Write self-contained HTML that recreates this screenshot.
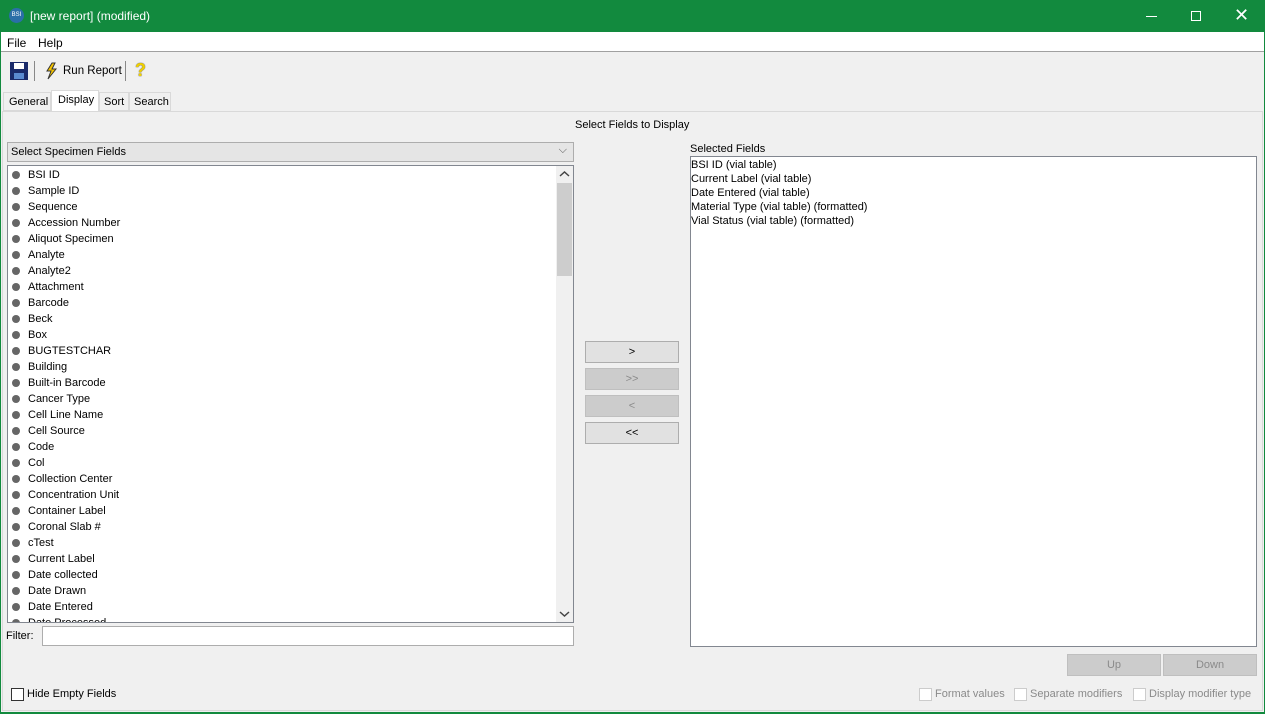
<!DOCTYPE html>
<html><head><style>
*{box-sizing:border-box;margin:0;padding:0}
body{width:1265px;height:714px;overflow:hidden;background:#f0f0f0;font-family:"Liberation Sans",sans-serif;font-size:11px;color:#000;position:relative}
.a{position:absolute}
.tb{left:0;top:0;width:1265px;height:32px;background:#128a3e;color:#fff;font-size:12px}
.list div{height:16px;line-height:16px;padding-left:20px;position:relative;white-space:nowrap}
.list div:before{content:"";position:absolute;left:4px;top:4px;width:8px;height:8px;border-radius:50%;background:#666}
.btn{border:1px solid #adadad;background:#e1e1e1;text-align:center;line-height:20px}
.dis{background:#cccccc;color:#8a8a8a;border-color:#bfbfbf}
.cb{width:13px;height:13px;border:1px solid #333;background:#fff}
.cbd{border-color:#ccc}
</style></head><body>
<div class="a tb">
 <div class="a" style="left:9px;top:8px;width:15px;height:15px;border-radius:50%;background:#2a6fa8;font-size:6px;line-height:15px;text-align:center">BSI</div>
 <div class="a" style="left:30px;top:9px">[new report] (modified)</div>
 <div class="a" style="left:1146px;top:16px;width:11px;height:1px;background:#fff"></div>
 <div class="a" style="left:1191px;top:11px;width:10px;height:10px;border:1px solid #fff"></div>
 <div class="a" style="left:1234px;top:3px;font-size:18px;line-height:24px">✕</div>
</div>
<div class="a" style="left:0;top:32px;width:1265px;height:20px;background:#fff;border-bottom:1px solid #a0a0a0"></div>
<div class="a" style="left:7px;top:36px;font-size:12px">File</div>
<div class="a" style="left:38px;top:36px;font-size:12px">Help</div>
<div class="a" style="left:0;top:32px;width:1px;height:682px;background:#128a3e"></div>
<div class="a" style="left:1264px;top:32px;width:1px;height:682px;background:#128a3e"></div>
<div class="a" style="left:0;top:712px;width:1265px;height:2px;background:#128a3e"></div>
<!-- toolbar -->
<svg class="a" style="left:10px;top:62px" width="18" height="18"><rect x="0" y="0" width="18" height="18" fill="#1a2a6a"/><rect x="4" y="1" width="10" height="6" fill="#fff"/><rect x="4" y="11" width="10" height="6" fill="#5a8ad0"/></svg>
<div class="a" style="left:34px;top:61px;width:1px;height:20px;background:#888"></div>
<svg class="a" style="left:44px;top:62px" width="14" height="18"><path d="M8 1 L3 9 L7 9 L4 17 L12 7 L8 7 L11 1 Z" fill="#f5c400" stroke="#333" stroke-width="1"/></svg>
<div class="a" style="left:63px;top:65px;font-size:11.5px">Run Report</div>
<div class="a" style="left:125px;top:61px;width:1px;height:20px;background:#888"></div>
<div class="a" style="left:135px;top:60px;font-size:18px;font-weight:bold;color:#f0d000;text-shadow:0 0 1px #000">?</div>
<!-- tabs -->
<div class="a" style="left:3px;top:92px;width:48px;height:19px;border:1px solid #d9d9d9;background:#f0f0f0;padding:3px 5px">General</div>
<div class="a" style="left:51px;top:90px;width:48px;height:21px;border:1px solid #d9d9d9;border-bottom:none;background:#fff;padding:3px 6px">Display</div>
<div class="a" style="left:99px;top:92px;width:30px;height:19px;border:1px solid #d9d9d9;background:#f0f0f0;padding:3px 4px">Sort</div>
<div class="a" style="left:129px;top:92px;width:42px;height:19px;border:1px solid #d9d9d9;background:#f0f0f0;padding:3px 4px">Search</div>
<div class="a" style="left:2px;top:111px;width:1261px;height:600px;border:1px solid #d9d9d9;background:#f0f0f0"></div>
<div class="a" style="left:575px;top:119px;font-size:11px">Select Fields to Display</div>
<!-- combo -->
<div class="a" style="left:7px;top:142px;width:567px;height:20px;border:1px solid #adadad;background:#e5e5e5;padding:3px 3px">Select Specimen Fields<span class="a" style="right:6px;top:1px;color:#555">⌵</span></div>
<!-- left list -->
<div class="a list" style="left:7px;top:165px;width:567px;height:458px;border:1px solid #828790;background:#fff;overflow:hidden;padding-top:1px">
<div>BSI ID</div><div>Sample ID</div><div>Sequence</div><div>Accession Number</div><div>Aliquot Specimen</div><div>Analyte</div><div>Analyte2</div><div>Attachment</div><div>Barcode</div><div>Beck</div><div>Box</div><div>BUGTESTCHAR</div><div>Building</div><div>Built-in Barcode</div><div>Cancer Type</div><div>Cell Line Name</div><div>Cell Source</div><div>Code</div><div>Col</div><div>Collection Center</div><div>Concentration Unit</div><div>Container Label</div><div>Coronal Slab #</div><div>cTest</div><div>Current Label</div><div>Date collected</div><div>Date Drawn</div><div>Date Entered</div><div>Date Processed</div>
</div>
<div class="a" style="left:556px;top:166px;width:17px;height:456px;background:#f0f0f0"></div>
<div class="a" style="left:557px;top:183px;width:15px;height:93px;background:#cdcdcd"></div>
<svg class="a" style="left:559px;top:170px" width="11" height="8"><path d="M1 6 L5.5 2 L10 6" fill="none" stroke="#444" stroke-width="1.5"/></svg>
<svg class="a" style="left:559px;top:610px" width="11" height="8"><path d="M1 2 L5.5 6 L10 2" fill="none" stroke="#444" stroke-width="1.5"/></svg>
<div class="a" style="left:6px;top:630px">Filter:</div>
<div class="a" style="left:42px;top:626px;width:532px;height:20px;border:1px solid #adadad;background:#fff"></div>
<div class="a cb" style="left:11px;top:688px"></div>
<div class="a" style="left:27px;top:688px">Hide Empty Fields</div>
<!-- buttons -->
<div class="a btn" style="left:585px;top:341px;width:94px;height:22px">&gt;</div>
<div class="a btn dis" style="left:585px;top:368px;width:94px;height:22px">&gt;&gt;</div>
<div class="a btn dis" style="left:585px;top:395px;width:94px;height:22px">&lt;</div>
<div class="a btn" style="left:585px;top:422px;width:94px;height:22px">&lt;&lt;</div>
<!-- right -->
<div class="a" style="left:690px;top:143px">Selected Fields</div>
<div class="a" style="left:690px;top:156px;width:567px;height:491px;border:1px solid #828790;background:#fff;line-height:14px;padding-top:1px;padding-left:0">
<div>BSI ID (vial table)</div><div>Current Label (vial table)</div><div>Date Entered (vial table)</div><div>Material Type (vial table) (formatted)</div><div>Vial Status (vial table) (formatted)</div>
</div>
<div class="a btn dis" style="left:1067px;top:654px;width:94px;height:22px">Up</div>
<div class="a btn dis" style="left:1163px;top:654px;width:94px;height:22px">Down</div>
<div class="a cb cbd" style="left:919px;top:688px"></div>
<div class="a" style="left:935px;top:688px;color:#8a8a8a">Format values</div>
<div class="a cb cbd" style="left:1014px;top:688px"></div>
<div class="a" style="left:1030px;top:688px;color:#8a8a8a">Separate modifiers</div>
<div class="a cb cbd" style="left:1133px;top:688px"></div>
<div class="a" style="left:1149px;top:688px;color:#8a8a8a">Display modifier type</div>
</body></html>
